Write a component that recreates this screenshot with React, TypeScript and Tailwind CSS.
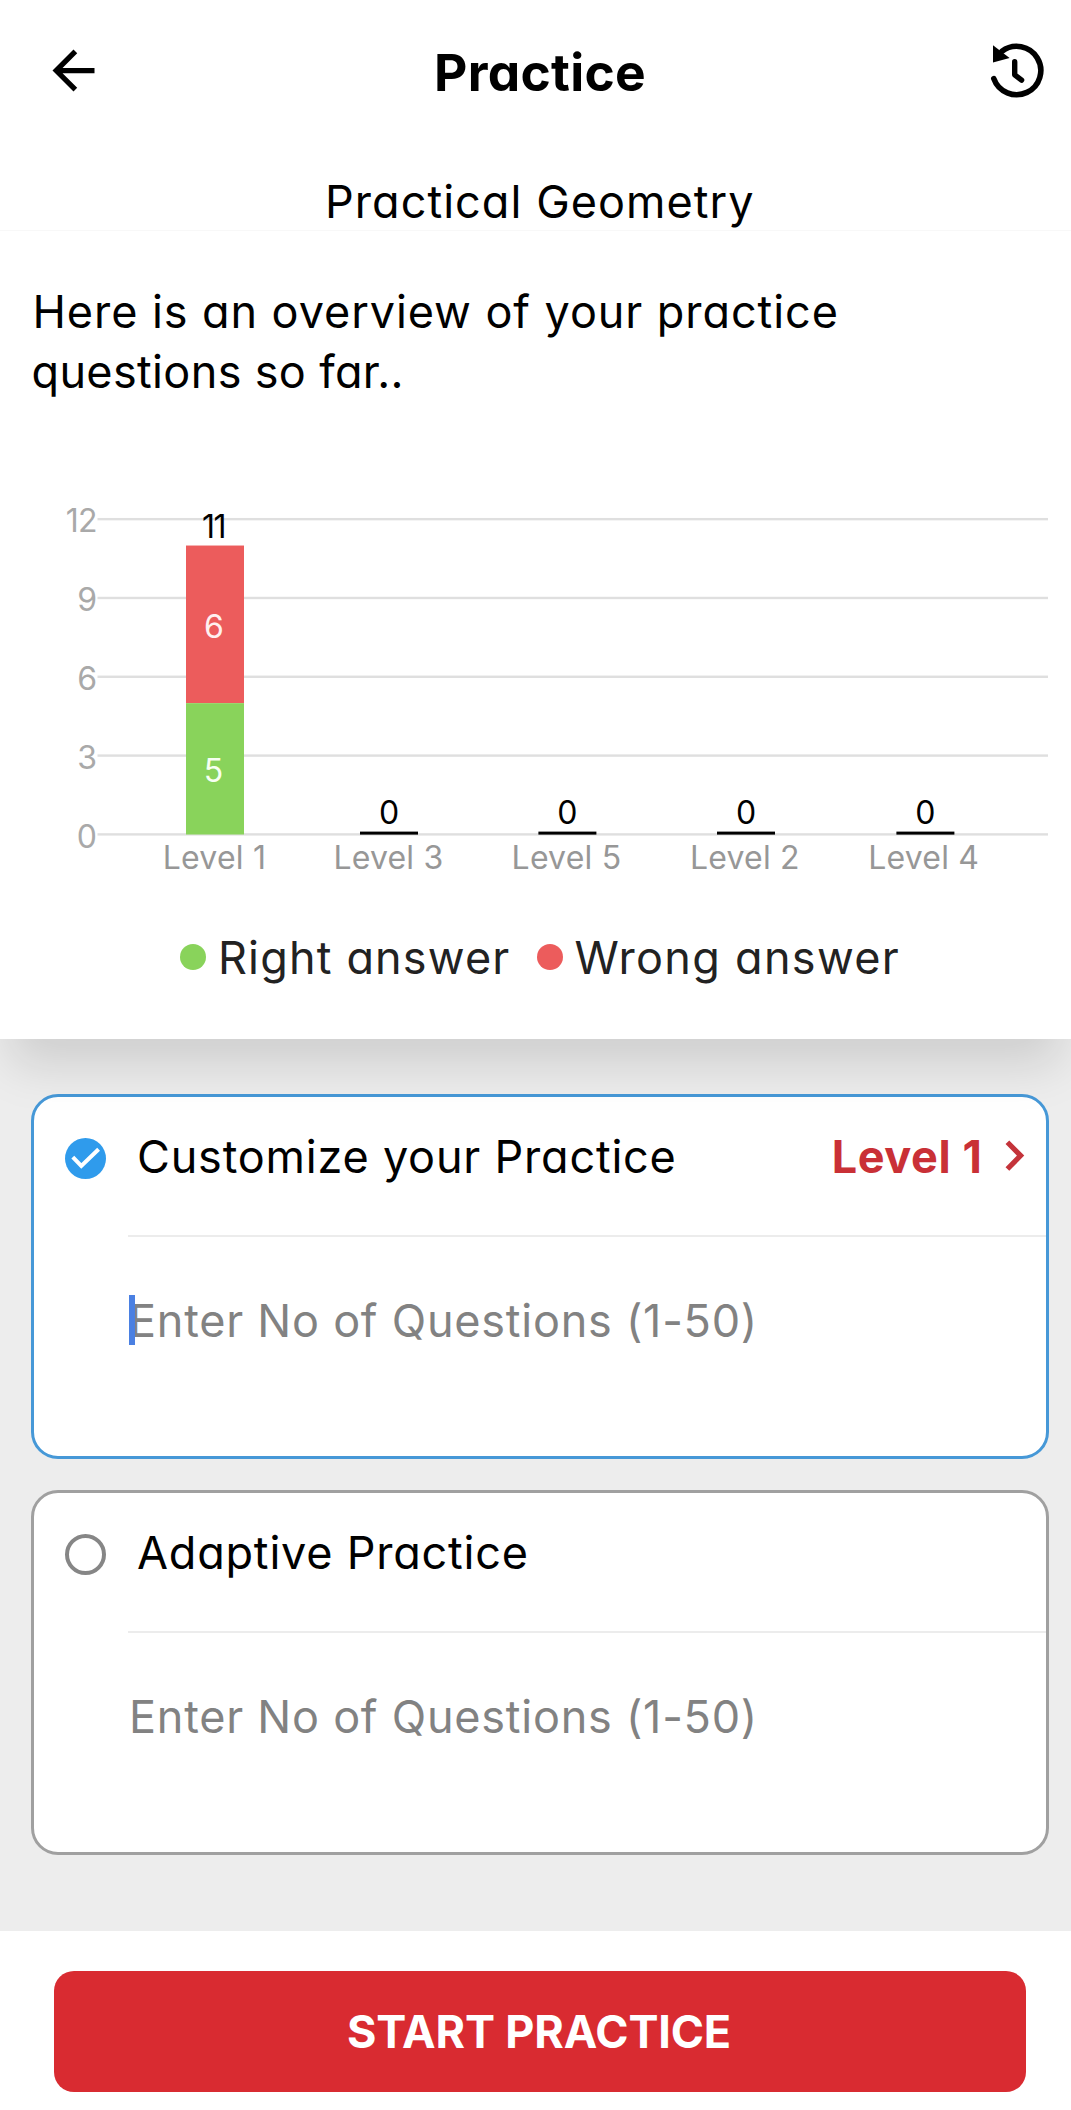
import type { ReactNode } from "react";

type Level = { name: string; right: number; wrong: number; x: number; labelX: number };

const levels: Level[] = [
  { name: "Level 1", right: 5, wrong: 6, x: 186, labelX: 162.8 },
  { name: "Level 3", right: 0, wrong: 0, x: 360, labelX: 333.4 },
  { name: "Level 5", right: 0, wrong: 0, x: 538.4, labelX: 511.6 },
  { name: "Level 2", right: 0, wrong: 0, x: 717, labelX: 690 },
  { name: "Level 4", right: 0, wrong: 0, x: 896.4, labelX: 868.2 },
];

const ticks = [12, 9, 6, 3, 0];
const BASE = 834.5;
const UNIT = 26.27;
const BAR = 58;

function Chart() {
  return (
    <svg className="block h-[498px] w-full text-[32px]" viewBox="0 402 1071 498">
      {ticks.map((t) => {
        const y = BASE - t * UNIT;
        return (
          <g key={t}>
            <rect x="97.5" y={y - 1.3} width="950.5" height="2.4" fill="#dfdfdf" />
            <text x="97" y={y + 13} textAnchor="end" fill="#a9a9a9" letterSpacing={t === 12 ? -0.6 : 0}>
              {t}
            </text>
          </g>
        );
      })}
      {levels.map((l) => {
        const total = l.right + l.wrong;
        const rightTop = BASE - l.right * UNIT;
        const top = BASE - total * UNIT;
        const mid = l.x + BAR / 2;
        return (
          <g key={l.name}>
            {total > 0 ? (
              <>
                <rect x={l.x} y={top} width={BAR} height={rightTop - top} fill="#ec5c5c" />
                <rect x={l.x} y={rightTop} width={BAR} height={BASE - rightTop} fill="#89d35b" />
                <text x={mid - 1} y="638" textAnchor="middle" fill="#fff0f0">{l.wrong}</text>
                <text x={mid - 1.5} y="781.5" textAnchor="middle" fill="#f7fff2">{l.right}</text>
                <text x={mid - 1.5} y="537.5" textAnchor="middle" fill="#000" letterSpacing="-1.6">{total}</text>
              </>
            ) : (
              <>
                <rect x={l.x} y="831.6" width={BAR} height="3" fill="#000" />
                <text x={mid} y="823.5" textAnchor="middle" fill="#000">{total}</text>
              </>
            )}
            <text x={l.labelX} y="868.6" fill="#979797" letterSpacing="0.2">{l.name}</text>
          </g>
        );
      })}
    </svg>
  );
}

function HistoryIcon() {
  return (
    <svg className="mr-[26px] ml-auto size-14" viewBox="-28 -28 56 56" fill="none" stroke="#000" strokeLinecap="round" strokeLinejoin="round">
      <path d="M-23.2 8.6A24.2 24.2 0 1 0 -15 -18.8" strokeWidth="5.6" />
      <path d="M-24 -24.8V-7.4L-7.4 -12Z" fill="#000" stroke="none" />
      <path d="M-2.3 -8.2V4.8L4.6 10.2" strokeWidth="5.4" />
    </svg>
  );
}

function CheckedIcon() {
  return (
    <svg className="size-[41px] shrink-0" viewBox="0 0 41 41">
      <circle cx="20.5" cy="20.5" r="20.5" fill="#2f9bec" />
      <path d="M7.8 19.2L16.3 28L33.6 11.2" fill="none" stroke="#fff" strokeWidth="4" />
    </svg>
  );
}

function UncheckedIcon() {
  return (
    <svg className="size-[41px] shrink-0" viewBox="0 0 41 41">
      <circle cx="20.5" cy="20.5" r="18.5" fill="none" stroke="#868686" strokeWidth="4" />
    </svg>
  );
}

function OptionCard({ selected, title, action }: { selected?: boolean; title: ReactNode; action?: ReactNode }) {
  return (
    <section
      className={
        selected
          ? "flex h-[365px] flex-col rounded-[27px] border-[3px] border-[#4698d7] bg-white"
          : "flex h-[365px] flex-col rounded-[27px] border-[3px] border-[#a0a0a0] bg-white"
      }
    >
      <div className="flex h-[138px] items-start pt-[30px] pr-[20px] pl-[31px]">
        <div className="pt-[11px]">{selected ? <CheckedIcon /> : <UncheckedIcon />}</div>
        {title}
        {action}
      </div>
      <div className="ml-[94px] h-[2px] bg-[#ececec]" />
      <div className="relative ml-[95px] pt-[54px] leading-[60px] tracking-[0.76px] text-[#828282]">
        Enter No of Questions (1-50)
        {selected && <span className="absolute top-[58px] left-0 h-[50px] w-[6px] bg-[#4a80e2]" />}
      </div>
    </section>
  );
}

export default function App() {
  return (
    <div className="flex h-[2110px] w-[1071px] flex-col overflow-hidden bg-[#ededed] font-['Inter',sans-serif] text-[45px] text-black [font-feature-settings:'cv11']">
      <div className="relative z-10 h-[1039px] bg-white shadow-[0_36px_46px_-10px_rgba(0,0,0,0.13)]">
        <header className="h-[231px] border-b border-[#f8f8f8]">
          <div className="flex h-[140px] items-center pl-[42px]">
            <svg className="size-[63px]" viewBox="0 0 24 24">
              <path d="M20 11H7.83l5.59-5.59L12 4l-8 8 8 8 1.41-1.41L7.83 13H20v-2z" />
            </svg>
            <h1 className="mt-[4px] ml-[329px] text-[51.5px] leading-[60px] font-bold tracking-[0.3px]">Practice</h1>
            <HistoryIcon />
          </div>
          <h2 className="pt-[32px] pl-[325px] leading-[60px] tracking-[1.05px]">Practical Geometry</h2>
        </header>
        <p className="h-[171px] pt-[51px] leading-[60px]">
          <span className="block pl-[32.5px] tracking-[0.93px]">Here is an overview of your practice</span>
          <span className="block pl-[31.5px] tracking-[0.35px]">questions so far..</span>
        </p>
        <Chart />
        <div className="flex items-center pt-[28px] pl-[180px] leading-[60px] text-[#222]">
          <span className="mb-[3px] size-[26px] rounded-full bg-[#89d35b]" />
          <span className="ml-[12px] tracking-[1.16px]">Right answer</span>
          <span className="mb-[3px] ml-[27px] size-[26px] rounded-full bg-[#ec5c5c]" />
          <span className="ml-[11px] tracking-[1.3px]">Wrong answer</span>
        </div>
      </div>

      <main className="flex h-[892px] flex-col gap-[31px] pt-[55px] pr-[22.5px] pl-[31px]">
        <OptionCard
          selected
          title={<span className="ml-[31px] leading-[60px] tracking-[0.8px]">Customize your Practice</span>}
          action={
            <button className="ml-auto flex items-center gap-[21px] leading-[60px] font-bold tracking-[0.6px] text-[#c93036]">
              Level 1
              <svg className="mb-[2px] h-[32px] w-[22px]" viewBox="0 0 22 32" fill="none" stroke="#c4333a" strokeWidth="5.2">
                <path d="M3.4 2.2L16.6 15.6L3.4 29" />
              </svg>
            </button>
          }
        />
        <OptionCard title={<span className="ml-[31px] leading-[60px] tracking-[0.79px]">Adaptive Practice</span>} />
      </main>

      <footer className="flex-1 bg-white px-[54px] pt-[40px] pr-[45px]">
        <button className="h-[121px] w-full rounded-[20px] bg-[#d92b31] pr-[2px] font-bold tracking-[-0.16px] text-white">START PRACTICE</button>
      </footer>
    </div>
  );
}
